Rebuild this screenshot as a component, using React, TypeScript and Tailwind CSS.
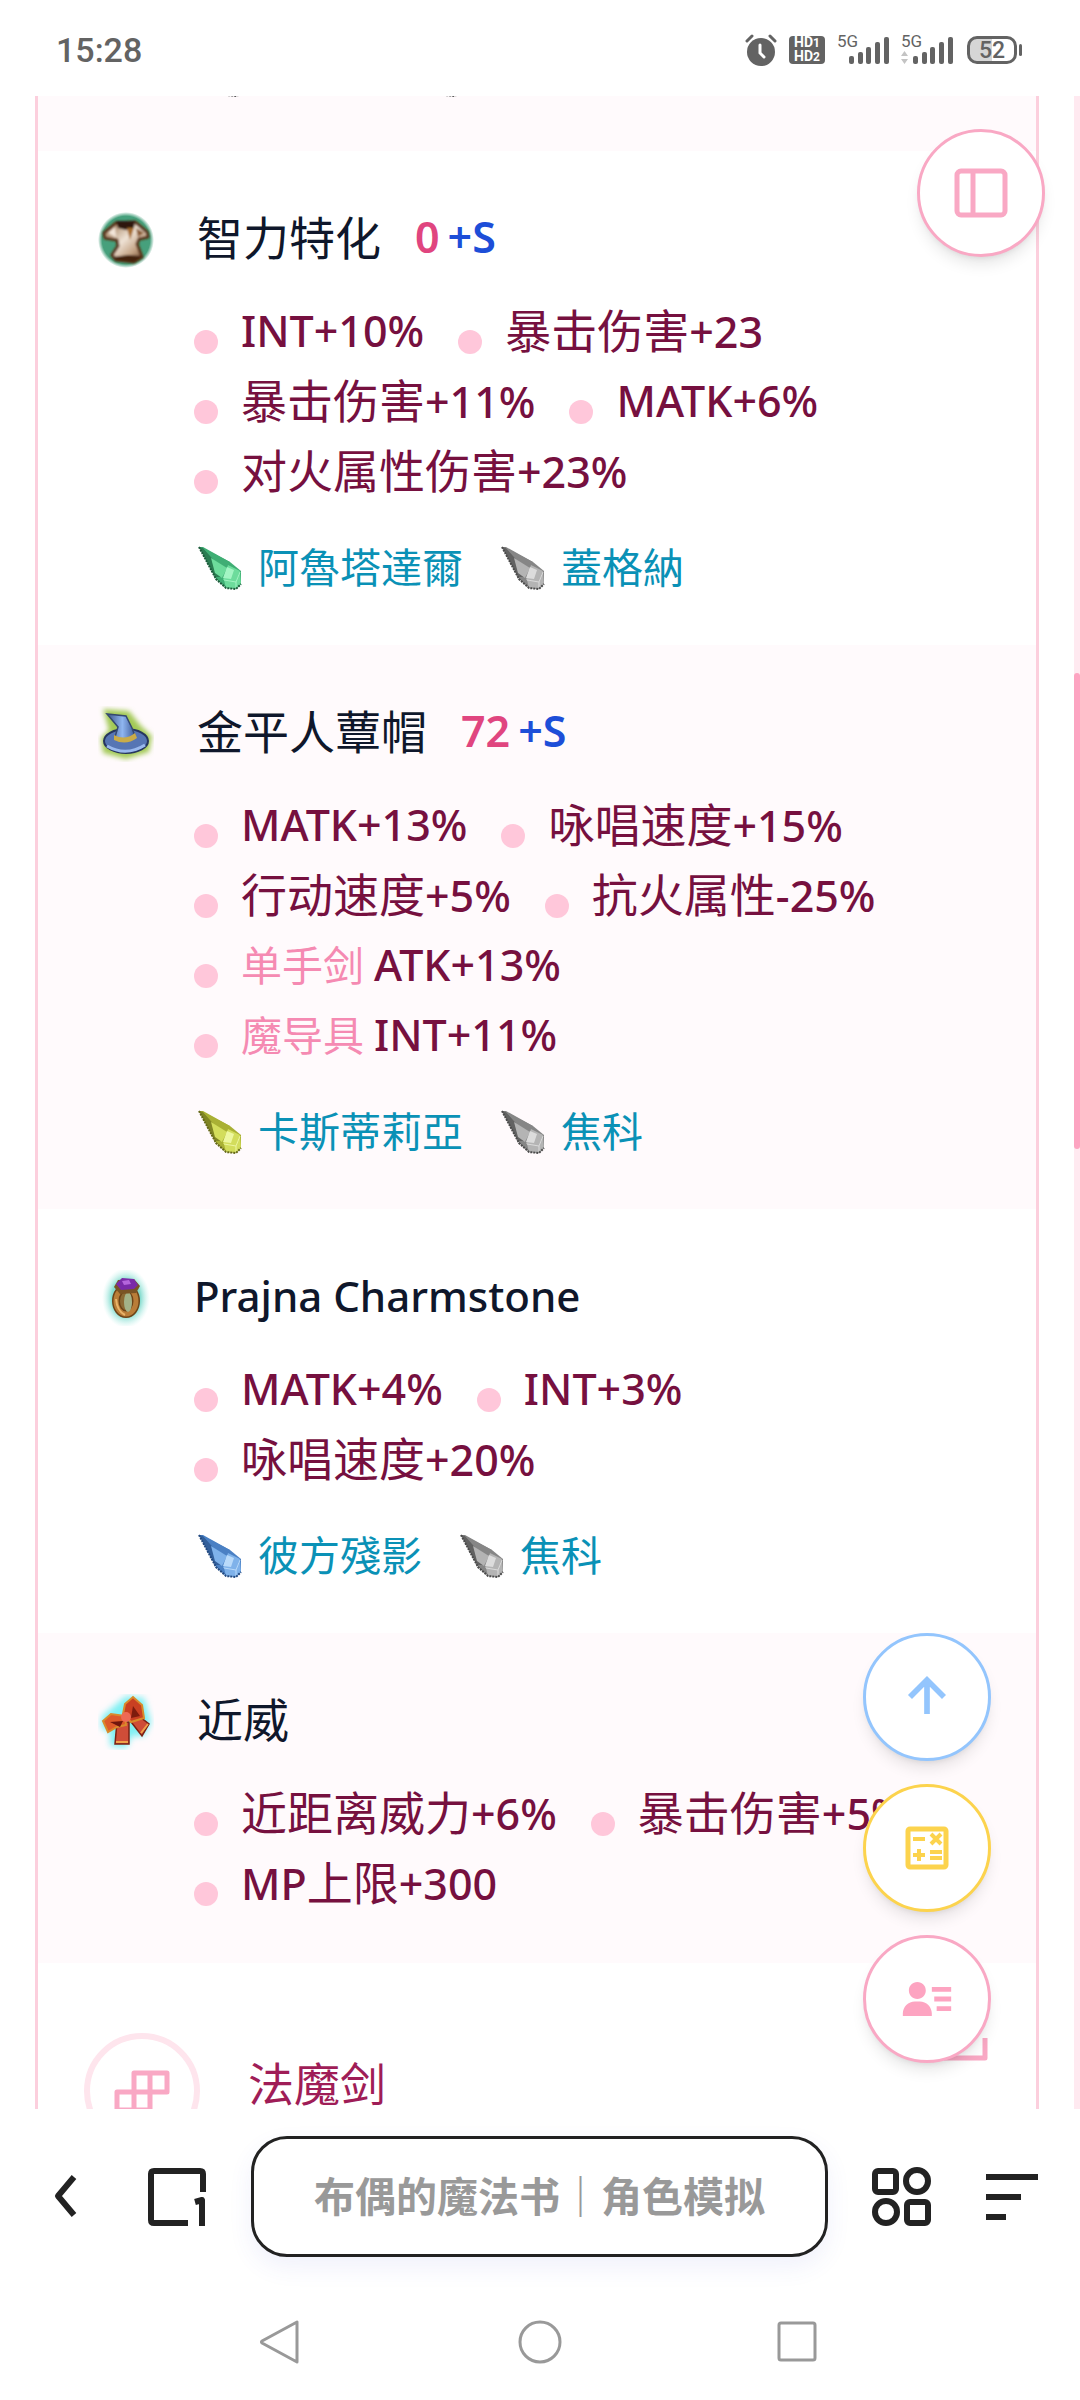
import React from 'react';
import { BiSolidUserDetail, BiUpArrowAlt } from 'react-icons/bi';

type CrystalColor = 'green' | 'gray' | 'yellow' | 'blue';

interface Stat {
  tag?: string;
  prefix?: string;
  label?: string;
  value: string;
}

interface Crystal {
  name: string;
  color: CrystalColor;
}

interface Equipment {
  name: string;
  latin?: boolean;
  icon: React.ReactNode;
  base?: string;
  refining?: string;
  stats: Stat[];
  crystals: Crystal[];
}

const crystalColors: Record<CrystalColor, [string, string, string, string]> = {
  green: ['#1d5c3c', '#3fae74', '#6ddc9c', '#a4f5c4'],
  gray: ['#4b4b4b', '#868686', '#b4b4b4', '#dcdcdc'],
  yellow: ['#66691a', '#a9b034', '#d3dd5c', '#eef7a0'],
  blue: ['#234a80', '#4a80c4', '#7fb2ea', '#b9dafa'],
};

const CrystalIcon: React.FC<{ color: CrystalColor }> = ({ color }) => {
  const [dark, mid, light, shine] = crystalColors[color];
  return (
    <svg className="size-11 shrink-0" viewBox="0 0 44 44" aria-hidden="true">
      <path d="M1 1 L5 1 L32 16 L43 25 L43 38 L38 43 L28 42 L18 33 Z" fill={mid} />
      <path d="M1 1 L5 2 L20 17 L25 31 L17 31 Z" fill={dark} opacity="0.6" />
      <path d="M5 2 L32 16 L29 22 L19 18 Z" fill={mid} />
      <path d="M13 12 L29 22 L24 32 L17 27 Z" fill={light} />
      <path d="M30 19 L42 25 L38 36 L25 34 Z" fill={light} />
      <path d="M29 21 L36 24 L33 33 L25 32 Z" fill={shine} />
      <path d="M26 34 L38 36 L42 26 L43 38 L38 43 L28 42 Z" fill={light} />
      <path d="M26 34 L38 36 L42 26 M38 36 V43" fill="none" stroke={shine} strokeWidth="1" />
      <path d="M1 1 L18 33 L28 42 L38 43 L43 38" fill="none" stroke={dark} strokeWidth="2" strokeDasharray="2 1" />
    </svg>
  );
};

const ArmorIcon = () => (
  <svg className="size-14" viewBox="0 0 56 56" aria-hidden="true">
    <defs>
      <radialGradient id="armorGlow">
        <stop offset="0.85" stopColor="#46a07c" />
        <stop offset="1" stopColor="#46a07c" stopOpacity="0" />
      </radialGradient>
      <linearGradient id="armorBody" x1="0" y1="0" x2="1" y2="1">
        <stop offset="0" stopColor="#8d6239" />
        <stop offset="0.45" stopColor="#efe3d6" />
        <stop offset="0.7" stopColor="#c3a284" />
        <stop offset="1" stopColor="#4a250d" />
      </linearGradient>
      <filter id="armorSoft">
        <feGaussianBlur stdDeviation="0.9" />
      </filter>
    </defs>
    <circle cx="28" cy="28" r="28" fill="url(#armorGlow)" />
    <g filter="url(#armorSoft)">
      <path d="M18 11 L37 10 L49 20 L50 25 L41 27 L39 32 L44 45 L36 50 L18 48 L14 43 L20 34 L19 28 L7 26 L6 21 Z" fill="url(#armorBody)" stroke="#5b3113" strokeWidth="3" strokeLinejoin="round" />
      <path d="M18 9 L37 9 L36 16 L28 18 L20 16 Z" fill="#2d1708" />
      <path d="M29 16 L32 28 L36 16 Z" fill="#a66c2b" />
      <path d="M10 21 L17 15 L18 25 Z" fill="#f3e6da" />
      <path d="M38 16 L46 21 L40 25 Z" fill="#8a5a32" />
      <path d="M15 45 L30 43 L44 44 L36 50 L18 48 Z" fill="#43210b" />
    </g>
  </svg>
);

const HatIcon = () => (
  <svg className="size-14" viewBox="0 0 56 56" aria-hidden="true">
    <defs>
      <filter id="hatBlur" x="-20%" y="-20%" width="140%" height="140%">
        <feGaussianBlur stdDeviation="2.5" />
      </filter>
      <filter id="hatSoft">
        <feGaussianBlur stdDeviation="0.6" />
      </filter>
      <linearGradient id="hatCone">
        <stop offset="0" stopColor="#3a5287" />
        <stop offset="0.55" stopColor="#8fb6f0" />
        <stop offset="1" stopColor="#3c5a99" />
      </linearGradient>
    </defs>
    <path d="M5 3 L31 5 L43 20 L54 30 L51 46 L28 53 L5 47 L3 32 L11 24 Z" fill="#a2c955" filter="url(#hatBlur)" />
    <g filter="url(#hatSoft)">
      <ellipse cx="28" cy="35" rx="22" ry="12" fill="#5674b4" stroke="#27365e" strokeWidth="2" />
      <path d="M17 31 L20 21 L9 8 L28 10 L34 22 L37 30 Q27 39 17 31 Z" fill="url(#hatCone)" stroke="#34486f" strokeWidth="1.5" />
      <path d="M16 29 Q27 35 37 27 L39 32 Q28 40 16 34 Z" fill="#c9ac48" />
      <path d="M9 40 Q28 51 47 39" fill="none" stroke="#9ab9ee" strokeWidth="3" />
    </g>
  </svg>
);

const RingIcon = () => (
  <svg className="size-14" viewBox="0 0 56 56" aria-hidden="true">
    <defs>
      <radialGradient id="ringGlow">
        <stop offset="0.6" stopColor="#86dccf" />
        <stop offset="1" stopColor="#c8f4ee" stopOpacity="0" />
      </radialGradient>
    </defs>
    <ellipse cx="28" cy="28" rx="24" ry="30" fill="url(#ringGlow)" />
    <ellipse cx="28" cy="31" rx="10" ry="13" fill="#8b6a34" stroke="#6d4418" strokeWidth="8" />
    <ellipse cx="28" cy="31" rx="10" ry="13" fill="none" stroke="#b97d38" strokeWidth="5" />
    <ellipse cx="30" cy="32" rx="4" ry="10" fill="#a3b388" />
    <path d="M16 17 L20 10 L36 9 L42 16 L38 23 L22 24 Z" fill="#7a5424" />
    <path d="M18 14 L24 8 L36 9 L40 15 L36 19 L23 20 Z" fill="#7a2aa8" />
    <path d="M24 11 L31 10 L33 14 L26 15 Z" fill="#b565dc" />
    <path d="M18 29 Q19 41 27 45" fill="none" stroke="#e9b46a" strokeWidth="2" />
  </svg>
);

const RibbonIcon = () => (
  <svg className="size-14" viewBox="0 0 56 56" aria-hidden="true">
    <defs>
      <filter id="ribbonBlur" x="-20%" y="-20%" width="140%" height="140%">
        <feGaussianBlur stdDeviation="3" />
      </filter>
      <filter id="ribbonSoft">
        <feGaussianBlur stdDeviation="0.5" />
      </filter>
    </defs>
    <path d="M4 22 L28 2 L46 4 L53 28 L46 42 L34 42 L28 54 L12 52 L12 38 L3 34 Z" fill="#7ff0f3" filter="url(#ribbonBlur)" />
    <g filter="url(#ribbonSoft)">
      <path d="M19 28 L17 50 L31 50 L31 28 Z" fill="#cf4d38" stroke="#7c2113" strokeWidth="1.5" />
      <path d="M30 24 L44 42 L51 30 L38 20 Z" fill="#cf4d38" stroke="#7c2113" strokeWidth="1.5" />
      <path d="M27 22 L13 20 L5 27 L10 38 L19 33 L28 31 Z" fill="#dd5a2c" stroke="#d98a2c" strokeWidth="2" />
      <path d="M25 20 L27 10 L35 3 L44 11 L46 24 L33 28 Z" fill="#c93f22" stroke="#d98a2c" strokeWidth="2" />
      <path d="M12 28 L25 27 L22 33 Z" fill="#6f130c" />
      <path d="M33 24 L35 12 L42 22 Z" fill="#7d1a0e" />
      <circle cx="28" cy="23" r="5" fill="#ee6a55" />
      <path d="M18 48 L30 48 M43 39 L50 30" stroke="#f0a24a" strokeWidth="2" />
    </g>
  </svg>
);

const equipments: Equipment[] = [
  {
    name: '智力特化',
    icon: <ArmorIcon />,
    base: '0',
    refining: '+S',
    stats: [
      { value: 'INT+10%' },
      { label: '暴击伤害', value: '+23' },
      { label: '暴击伤害', value: '+11%' },
      { value: 'MATK+6%' },
      { label: '对火属性伤害', value: '+23%' },
    ],
    crystals: [
      { name: '阿魯塔達爾', color: 'green' },
      { name: '蓋格納', color: 'gray' },
    ],
  },
  {
    name: '金平人蕈帽',
    icon: <HatIcon />,
    base: '72',
    refining: '+S',
    stats: [
      { value: 'MATK+13%' },
      { label: '咏唱速度', value: '+15%' },
      { label: '行动速度', value: '+5%' },
      { label: '抗火属性', value: '-25%' },
      { tag: '单手剑', value: 'ATK+13%' },
      { tag: '魔导具', value: 'INT+11%' },
    ],
    crystals: [
      { name: '卡斯蒂莉亞', color: 'yellow' },
      { name: '焦科', color: 'gray' },
    ],
  },
  {
    name: 'Prajna Charmstone',
    latin: true,
    icon: <RingIcon />,
    stats: [
      { value: 'MATK+4%' },
      { value: 'INT+3%' },
      { label: '咏唱速度', value: '+20%' },
    ],
    crystals: [
      { name: '彼方殘影', color: 'blue' },
      { name: '焦科', color: 'gray' },
    ],
  },
  {
    name: '近威',
    icon: <RibbonIcon />,
    stats: [
      { label: '近距离威力', value: '+6%' },
      { label: '暴击伤害', value: '+5%' },
      { prefix: 'MP', label: '上限', value: '+300' },
    ],
    crystals: [],
  },
];

const StatItem: React.FC<{ stat: Stat }> = ({ stat }) => (
  <li className="flex h-[70px] items-center gap-[23px]">
    <span className="mt-[22px] size-6 shrink-0 rounded-full bg-[#ffc7da]" />
    <span className="flex items-baseline whitespace-nowrap text-[43px] font-medium leading-[60px] text-[#76103f]">
      {stat.tag && <span className="mr-2.5 text-[41px] font-normal text-[#f58ab2]">{stat.tag}</span>}
      {stat.prefix}
      {stat.label && <span className="text-[46px] font-normal">{stat.label}</span>}
      {stat.value}
    </span>
  </li>
);

const EquipmentRow: React.FC<{ item: Equipment }> = ({ item }) => (
  <section className="flex gap-10 pb-[45px] pl-[60px] pr-[110px] pt-[61px] odd:bg-white even:bg-[#fffafc]">
    <div className="flex h-14 shrink-0 items-center">{item.icon}</div>
    <div className="min-w-0 flex-1">
      <div className="flex h-14 items-center pb-1.5">
        <h3
          className={
            item.latin
              ? 'text-[42px] font-medium text-slate-900'
              : 'pl-[3px] text-[46px] text-slate-900'
          }
        >
          {item.name}
        </h3>
        {item.base && (
          <p className="ml-[34px] flex gap-2 text-[43px] font-semibold text-[#e0457f]">
            {item.base}
            <span className="text-[#1d4ed8]">{item.refining}</span>
          </p>
        )}
      </div>
      <ul className="flex flex-wrap gap-x-[34px] pt-7">
        {item.stats.map((stat, i) => (
          <StatItem key={i} stat={stat} />
        ))}
      </ul>
      {item.crystals.length > 0 && (
        <ul className="flex gap-[38px] pb-[9px] pl-1 pt-[39px]">
          {item.crystals.map((crystal) => (
            <li key={crystal.name} className="flex h-[46px] items-center gap-4">
              <CrystalIcon color={crystal.color} />
              <span className="text-[41px] text-[#0a91b6]">{crystal.name}</span>
            </li>
          ))}
        </ul>
      )}
    </div>
  </section>
);

const SignalIcon: React.FC<{ arrows?: boolean }> = ({ arrows }) => (
  <svg className="h-8 w-[52px] overflow-visible" viewBox="0 0 52 32" fill="#636363" aria-hidden="true">
    <text x="0" y="13" fontSize="17" fontFamily="Roboto, sans-serif">5G</text>
    <rect x="12" y="22" width="5" height="8" rx="2" />
    <rect x="21" y="18" width="5" height="12" rx="2" />
    <rect x="29" y="13" width="5" height="17" rx="2" />
    <rect x="38" y="8" width="5" height="22" rx="2" />
    <rect x="47" y="3" width="5" height="27" rx="2" />
    {arrows && <path d="M0 22 L3.5 17 L7 22 Z M0 25 L3.5 30 L7 25 Z" fill="#c4c4c4" />}
  </svg>
);

const StatusBar = () => (
  <header className="flex h-24 shrink-0 items-center justify-between pl-14 pr-[58px] pt-1 text-[#636363]">
    <time className="font-[Roboto,sans-serif] text-[34px] font-medium">15:28</time>
    <div className="flex items-center gap-3">
      <svg className="size-8" viewBox="0 0 32 32" fill="none" stroke="#636363" aria-hidden="true">
        <circle cx="16" cy="18" r="14" fill="#636363" stroke="none" />
        <path d="M2 7 L7 2 M25 2 L30 7" strokeWidth="3" strokeLinecap="round" />
        <path d="M15 11 V19 L19 23" stroke="#fff" strokeWidth="3" strokeLinecap="round" />
      </svg>
      <div className="flex h-7 w-9 flex-col items-center justify-center rounded bg-[#636363] font-[Roboto,sans-serif] text-[14px] font-bold leading-[13px] text-white">
        <span>HD<span className="text-[12px]">1</span></span>
        <span>HD<span className="text-[12px]">2</span></span>
      </div>
      <SignalIcon />
      <SignalIcon arrows />
      <div className="ml-[2px] flex items-center gap-[2px]">
        <div className="flex h-7 w-[50px] items-center justify-center rounded-[10px] border-[3px] border-[#636363] bg-linear-to-r from-[#d6d6d6] from-50% to-white to-50% font-[Roboto,sans-serif] text-[23px] font-medium leading-none">
          52
        </div>
        <span className="h-3 w-[3px] rounded-full bg-[#636363]" />
      </div>
    </div>
  </header>
);

const fab = 'flex size-32 items-center justify-center rounded-full border-[3px] bg-white shadow-lg';

const App: React.FC = () => {
  return (
    <div className="flex h-screen flex-col overflow-hidden bg-white font-['Noto_Sans','Noto_Sans_CJK_SC',sans-serif]">
      <StatusBar />

      <main className="relative min-h-0 flex-1 overflow-hidden">
        <div className="ml-[35px] mr-[41px] h-full overflow-hidden border-x-[3px] border-[#fccfdd]">
          {/* tail of the previous row */}
          <div className="flex h-[55px] flex-col justify-end bg-[#fffafc] pb-[54px] pl-[161px]">
            <div className="flex gap-[174px]">
              <CrystalIcon color="gray" />
              <CrystalIcon color="gray" />
            </div>
          </div>
          <div>
            {equipments.map((item) => (
              <EquipmentRow key={item.name} item={item} />
            ))}
          </div>
          <section className="flex items-start pl-[46px] pr-12 pt-[70px]">
            <div className="flex size-[116px] shrink-0 items-center justify-center rounded-full border-[6px] border-[#fee5ed]">
              <svg className="h-[42px] w-14" viewBox="0 0 56 42" fill="none" stroke="#f9a8c4" strokeWidth="5" strokeLinejoin="round" aria-hidden="true">
                <path d="M20 3 H53 V22 H36 V40 H3 V22 H20 Z M36 3 V22 M20 22 V40 M20 22 H36" />
              </svg>
            </div>
            <h2 className="ml-12 mt-[18px] flex-1 text-[46px] leading-[64px] text-[#9f1d57]">法魔剑</h2>
            <svg className="h-7 w-11 shrink-0" viewBox="0 0 44 28" fill="none" stroke="#f9a8c4" strokeWidth="5" aria-hidden="true">
              <path d="M0 25 H41 V5" strokeLinejoin="round" />
            </svg>
          </section>
        </div>

        <div className="absolute inset-y-0 right-0 w-[6px] bg-[#ffe9f0]">
          <div className="mt-[577px] h-[476px] rounded-full bg-[#fda4c1]" />
        </div>

        <button type="button" aria-label="侧栏" className={`${fab} absolute right-[35px] top-[33px] border-[#f9a8c4] text-[#f9a8c4]`}>
          <svg className="size-14" viewBox="0 0 56 56" fill="none" stroke="currentColor" strokeWidth="5" aria-hidden="true">
            <rect x="4" y="6" width="48" height="44" rx="4" />
            <path d="M20 6 V50" />
          </svg>
        </button>

        <div className="absolute bottom-[46px] right-[89px] flex flex-col gap-[23px]">
          <button type="button" aria-label="回到顶部" className={`${fab} border-[#93c5fd] text-[#93c5fd]`}>
            <BiUpArrowAlt className="size-[68px]" />
          </button>
          <button type="button" aria-label="计算器" className={`${fab} border-[#fcd34d] text-[#fcd34d]`}>
            <svg className="size-11" viewBox="0 0 44 44" fill="none" stroke="currentColor" strokeWidth="5" aria-hidden="true">
              <rect x="3" y="3" width="38" height="38" rx="2" />
              <path d="M8 13 H20 M8 29 H20 M14 23 V35 M25 26 H37 M25 32 H37" strokeWidth="4" />
              <path d="M26 8 L36 18 M36 8 L26 18" strokeWidth="4" />
            </svg>
          </button>
          <button type="button" aria-label="角色" className={`${fab} border-[#f9a8c4] text-[#fda4c1]`}>
            <BiSolidUserDetail className="size-[58px]" />
          </button>
        </div>
      </main>

      <footer className="shrink-0">
        <div className="flex h-[175px] items-center px-9">
          <div className="flex gap-[51px]">
            <button type="button" aria-label="返回">
              <svg className="size-[60px]" viewBox="0 0 60 60" fill="none" stroke="#222" strokeWidth="6" aria-hidden="true">
                <path d="M38 10 L22 29 L38 48" strokeLinejoin="round" />
              </svg>
            </button>
            <button type="button" aria-label="标签页">
              <svg className="size-[60px]" viewBox="0 0 60 60" fill="none" stroke="#222" strokeWidth="6" aria-hidden="true">
                <path d="M56 25 V7 Q56 4 53 4 H7 Q4 4 4 7 V53 Q4 56 7 56 H41" />
                <path d="M48 35 L55 33 V59" strokeLinejoin="round" />
              </svg>
            </button>
          </div>
          <button
            type="button"
            className="mx-11 h-[121px] min-w-0 flex-1 whitespace-nowrap rounded-[36px] border-[3px] border-[#222] bg-white text-[41px] font-bold text-[#999] shadow-[0_10px_24px_rgba(60,80,200,0.08)]"
          >
            布偶的魔法书｜角色模拟
          </button>
          <div className="flex gap-[52px]">
            <button type="button" aria-label="应用">
              <svg className="size-[60px]" viewBox="0 0 60 60" fill="none" stroke="#222" strokeWidth="6" aria-hidden="true">
                <rect x="3" y="4" width="21" height="21" rx="3" />
                <circle cx="45" cy="14" r="11" />
                <circle cx="14" cy="45" r="11" />
                <rect x="35" y="35" width="21" height="21" rx="3" />
              </svg>
            </button>
            <button type="button" aria-label="菜单">
              <svg className="size-[60px]" viewBox="0 0 60 60" stroke="#222" strokeWidth="6" aria-hidden="true">
                <path d="M2 10 H54 M2 30 H37 M2 50 H22" />
              </svg>
            </button>
          </div>
        </div>

        <nav className="flex h-[116px] items-center justify-center gap-[215px]">
          <button type="button" aria-label="后退">
            <svg className="size-11" viewBox="0 0 44 44" fill="none" stroke="#999" strokeWidth="3" strokeLinejoin="round" aria-hidden="true">
              <path d="M38 2 V42 L3 23 Q2 22 3 21 Z" />
            </svg>
          </button>
          <button type="button" aria-label="主屏幕">
            <svg className="size-11" viewBox="0 0 44 44" fill="none" stroke="#999" strokeWidth="3" aria-hidden="true">
              <circle cx="22" cy="22" r="20" />
            </svg>
          </button>
          <button type="button" aria-label="最近任务">
            <svg className="size-11" viewBox="0 0 44 44" fill="none" stroke="#999" strokeWidth="3" aria-hidden="true">
              <rect x="2" y="3" width="36" height="37" rx="2" />
            </svg>
          </button>
        </nav>
      </footer>
    </div>
  );
};

export default App;
